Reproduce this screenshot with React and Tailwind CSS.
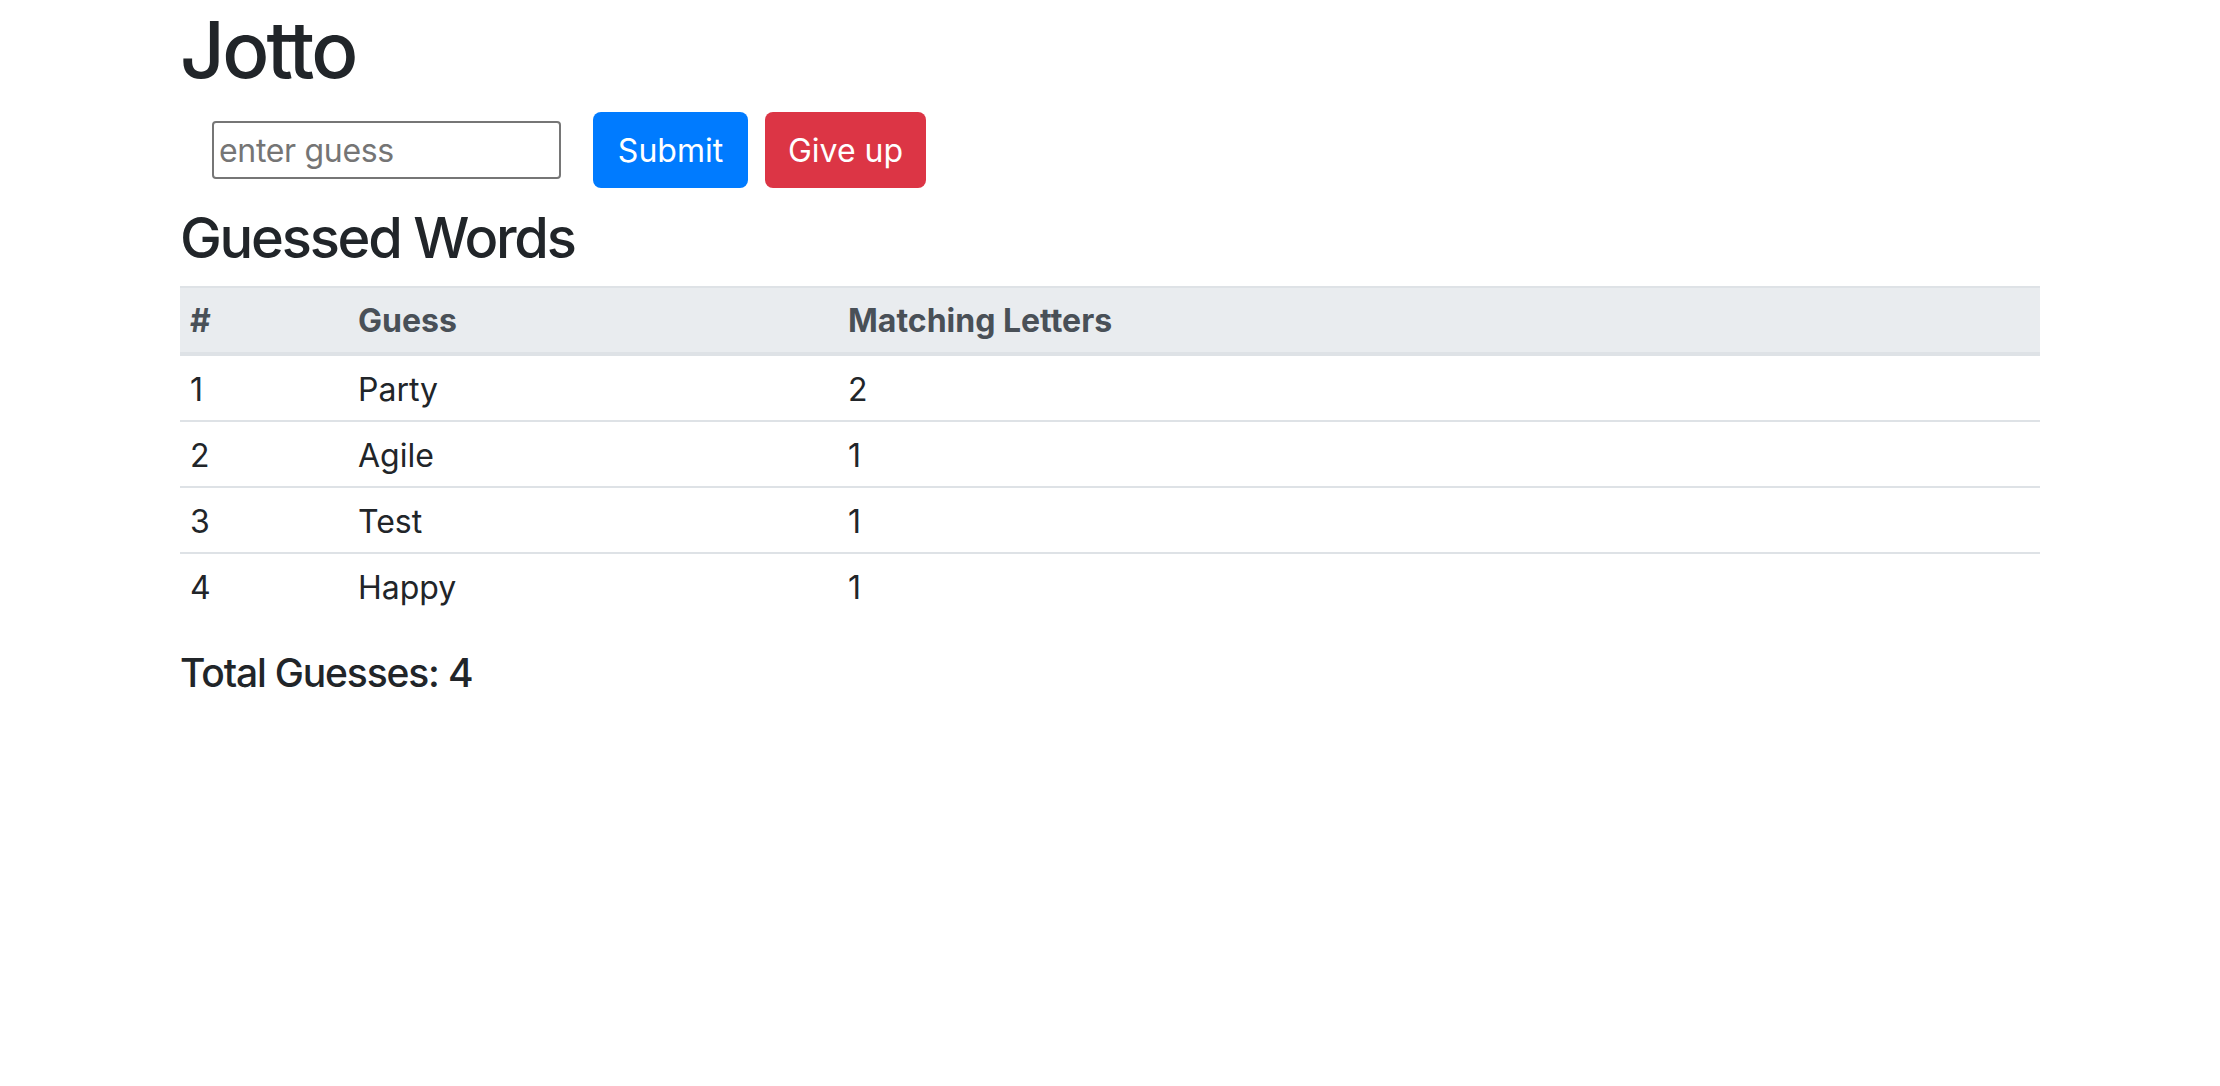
import React from "react";

const guesses = [
  { word: "Party", match: 2 },
  { word: "Agile", match: 1 },
  { word: "Test", match: 1 },
  { word: "Happy", match: 1 },
];

export default function App() {
  return (
    <div className="min-h-screen bg-white font-['Inter','Liberation_Sans',sans-serif] text-[#212529]">
      <div className="mx-auto w-[1920px] px-[30px]">
        <h1 className="h-[96px] mb-[16px] pt-[2px] text-[78px] leading-[96px] font-medium tracking-[-0.035em]">Jotto</h1>

        <form className="flex items-center h-[76px]" onSubmit={(e) => e.preventDefault()}>
          <input
            type="text"
            placeholder="enter guess"
            className="mx-[32px] h-[58px] w-[349px] rounded-[4px] border-2 border-[#767676] px-[5px] text-[32px] tracking-[-0.01em] placeholder:text-[#757575] outline-none"
          />
          <button className="h-[76px] w-[155px] rounded-[8px] bg-[#007bff] pt-[2px] text-[32px] text-white">
            Submit
          </button>
          <button className="ml-[17px] h-[76px] w-[161px] rounded-[8px] bg-[#dc3545] pt-[2px] text-[32px] text-white">
            Give up
          </button>
        </form>

        <h2 className="mt-[17px] mb-[14px] text-[56px] leading-[67px] font-medium tracking-[-0.04em]">Guessed Words</h2>

        <table className="w-full border-separate border-spacing-0 text-[32px]">
          <thead>
            <tr className="bg-[#e9ecef] text-[#495057]">
              <th className="w-[168px] border-t-2 border-b-4 border-[#dee2e6] px-[10px] pt-[9px] pb-[7px] text-left leading-[48px] font-bold">#</th>
              <th className="w-[490px] border-t-2 border-b-4 border-[#dee2e6] px-[10px] pt-[9px] pb-[7px] text-left leading-[48px] font-bold">Guess</th>
              <th className="border-t-2 border-b-4 border-[#dee2e6] px-[10px] pt-[9px] pb-[7px] text-left leading-[48px] font-bold">Matching Letters</th>
            </tr>
          </thead>
          <tbody>
            {guesses.map((g, i) => {
              const line = i === 0 ? "" : "border-t-2 border-[#dee2e6]";
              return (
                <tr key={g.word}>
                  <td className={`${line} px-[10px] pt-[10px] pb-[6px] leading-[48px]`}>{i + 1}</td>
                  <td className={`${line} px-[10px] pt-[10px] pb-[6px] leading-[48px]`}>{g.word}</td>
                  <td className={`${line} px-[10px] pt-[10px] pb-[6px] leading-[48px]`}>{g.match}</td>
                </tr>
              );
            })}
          </tbody>
        </table>

        <div className="mt-[31px] text-[39px] leading-[48px] font-medium tracking-[-0.03em]">Total Guesses: {guesses.length}</div>
      </div>
    </div>
  );
}
